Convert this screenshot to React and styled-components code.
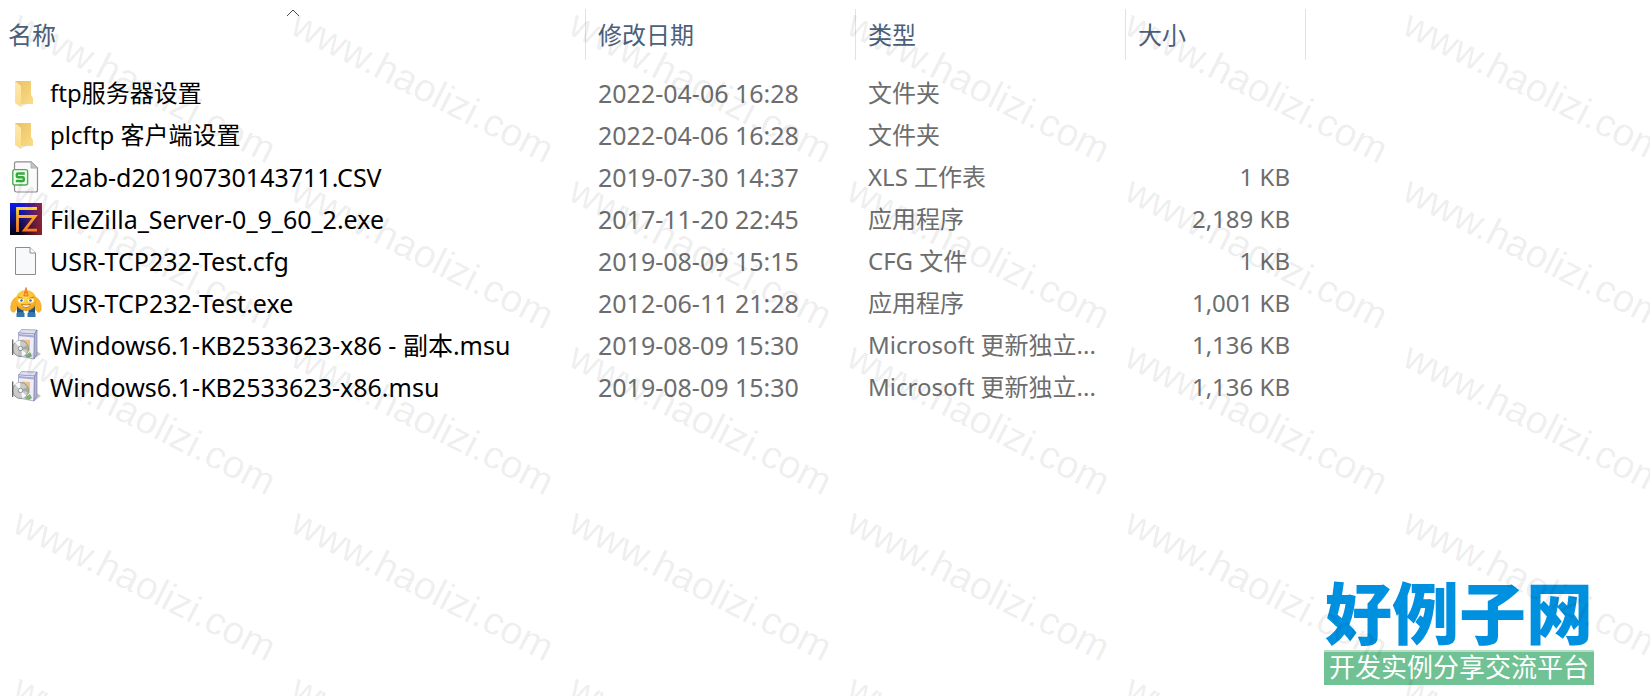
import styled, { createGlobalStyle } from "styled-components";

const files = [
  { icon: "folder", name: "ftp服务器设置", date: "2022-04-06 16:28", type: "文件夹", size: "" },
  { icon: "folder", name: "plcftp 客户端设置", date: "2022-04-06 16:28", type: "文件夹", size: "" },
  { icon: "csv", name: "22ab-d20190730143711.CSV", date: "2019-07-30 14:37", type: "XLS 工作表", size: "1 KB" },
  { icon: "filezilla", name: "FileZilla_Server-0_9_60_2.exe", date: "2017-11-20 22:45", type: "应用程序", size: "2,189 KB" },
  { icon: "file", name: "USR-TCP232-Test.cfg", date: "2019-08-09 15:15", type: "CFG 文件", size: "1 KB" },
  { icon: "usr", name: "USR-TCP232-Test.exe", date: "2012-06-11 21:28", type: "应用程序", size: "1,001 KB" },
  { icon: "msu", name: "Windows6.1-KB2533623-x86 - 副本.msu", date: "2019-08-09 15:30", type: "Microsoft 更新独立...", size: "1,136 KB" },
  { icon: "msu", name: "Windows6.1-KB2533623-x86.msu", date: "2019-08-09 15:30", type: "Microsoft 更新独立...", size: "1,136 KB" },
];

const marks = Array.from({ length: 30 }, (_, i) => i);

const FolderIcon = () => (
  <Icon viewBox="0 0 32 32">
    <defs>
      <linearGradient id="folderBack" x1="0" y1="0" x2="1" y2="1">
        <stop offset="0" stopColor="#e9c163" />
        <stop offset="1" stopColor="#fbdc86" />
      </linearGradient>
      <linearGradient id="folderFlap" x1="0" y1="0" x2="0" y2="1">
        <stop offset="0" stopColor="#ffeab0" />
        <stop offset="1" stopColor="#fbdb88" />
      </linearGradient>
    </defs>
    <path d="M10 30l7-3h-7z" fill="#e6e6e6" />
    <path d="M5 4h16v14l2 3v6H8L5 24z" fill="url(#folderBack)" />
    <path d="M5 4l6 5v21l-6-4z" fill="url(#folderFlap)" />
  </Icon>
);

const CsvIcon = () => (
  <Icon viewBox="0 0 32 32">
    <path d="M6 .8h15l6.500 6.300V29a2 2 0 0 1-2 2H6.500a2 2 0 0 1-2-2V2.300A1.500 1.500 0 0 1 6 .8z" fill="#fafafa" stroke="#8d8d8d" strokeWidth="1.200" />
    <path d="M21 .8v6.300h6.500z" fill="#c3c7cb" stroke="#a3a7ab" strokeWidth=".8" />
    <rect x="2.800" y="8.600" width="14.800" height="15.400" rx="2" fill="#f5fff5" stroke="#4caf50" strokeWidth="1.400" />
    <path d="M14.800 12.500H7.800a1 1 0 0 0-1 1v1.700a1 1 0 0 0 1 1h5a1 1 0 0 1 1 1V19a1 1 0 0 1-1 1H5.800" fill="none" stroke="#35ab3c" strokeWidth="2.400" />
  </Icon>
);

const FileZillaIcon = () => (
  <Icon viewBox="0 0 32 32">
    <defs>
      <linearGradient id="fzBlue" x1="0" y1="0" x2="0" y2="1">
        <stop offset="0" stopColor="#0a1cf0" />
        <stop offset="1" stopColor="#06020e" />
      </linearGradient>
      <linearGradient id="fzRed" x1="0" y1="0" x2="1" y2="0">
        <stop offset=".3" stopColor="#a0252c" stopOpacity="0" />
        <stop offset="1" stopColor="#a0252c" stopOpacity=".9" />
      </linearGradient>
      <linearGradient id="fzMark" x1="0" y1="0" x2="0" y2="32" gradientUnits="userSpaceOnUse">
        <stop offset=".1" stopColor="#ffe42c" />
        <stop offset=".5" stopColor="#fb9e26" />
        <stop offset="1" stopColor="#f86b20" />
      </linearGradient>
    </defs>
    <rect width="32" height="32" fill="url(#fzBlue)" />
    <rect width="32" height="32" fill="url(#fzRed)" />
    <path d="M27 5.500H7.500V29M7.500 13.500H25L14.500 27.200H27" fill="none" stroke="url(#fzMark)" strokeWidth="2.800" />
  </Icon>
);

const FileIcon = () => (
  <Icon viewBox="0 0 32 32">
    <path d="M5.500 2.500h14.500l5.500 5.500v21.500h-20z" fill="#f7f9fa" stroke="#8c8c8c" />
    <path d="M20 2.500v5.500h5.500" fill="#fff" stroke="#8c8c8c" />
  </Icon>
);

const UsrIcon = () => (
  <Icon viewBox="0 0 32 32">
    <defs>
      <radialGradient id="usrBody" cx=".45" cy=".35" r=".65">
        <stop offset="0" stopColor="#ffe14a" />
        <stop offset=".7" stopColor="#fdb92a" />
        <stop offset="1" stopColor="#eb9310" />
      </radialGradient>
    </defs>
    <path d="M7 19h18v8h-6.500v-4h-5v4H7z" fill="#1f527f" />
    <path d="M6.500 26q4-2 8 0v4h-8zM17.500 26q4-2 8 0v4h-8z" fill="#3478ab" />
    <path d="M7 10C2.500 11 0 18 1 23c1 3 4 3 5.500-1zM25 10c4.500 1 7 8 6 13-1 3-4 3-5.500-1z" fill="#fbb52c" stroke="#e99a1e" strokeWidth=".6" />
    <ellipse cx="16" cy="13.500" rx="10.500" ry="10.500" fill="url(#usrBody)" />
    <path d="M16 .5l-2.200 8.500h4.400z" fill="#ffa64a" stroke="#e4601d" strokeWidth=".7" />
    <path d="M14.800 5.500h2.400" stroke="#e4601d" strokeWidth=".8" />
    <path d="M8 10l5 1.500M24 10l-5 1.500" stroke="#b06a10" strokeWidth=".8" />
    <ellipse cx="11" cy="13.500" rx="2.800" ry="2" fill="#fff" />
    <ellipse cx="21" cy="13.500" rx="2.800" ry="2" fill="#fff" />
    <circle cx="11.500" cy="13.500" r="1.300" fill="#4a62b0" />
    <circle cx="20.500" cy="13.500" r="1.300" fill="#4a62b0" />
    <path d="M11.500 17.500q4.500 1 9 0-1 3-4.500 3t-4.500-3z" fill="#fff" stroke="#a65b0c" strokeWidth=".7" />
  </Icon>
);

const MsuIcon = () => (
  <Icon viewBox="0 0 32 32">
    <path d="M25 21l6 4-7 5z" fill="#c4c4c4" />
    <path d="M8.500 4l3-3.500 15.500 .5-2.500 4z" fill="#dfe0f3" stroke="#7b7da8" strokeWidth=".6" />
    <path d="M8.500 4l16 1-.5 25-15.500-3z" fill="#eceef8" stroke="#8183ad" strokeWidth=".6" />
    <path d="M24.500 5L27 1v24l-3 5z" fill="#b2b4d3" stroke="#7073a2" strokeWidth=".6" />
    <path d="M8.500 6l16 1.500" stroke="#a5a8d3" strokeWidth="2" />
    <path d="M12 10.500l8 .5v11l-5 2z" fill="#edc187" />
    <circle cx="10.500" cy="19.500" r="8" fill="#c8cbcb" stroke="#777" strokeWidth=".7" />
    <path d="M10.500 19.500L5 13.500a8 8 0 0 1 5-2zM10.500 19.500l6 5a8 8 0 0 1-4 3z" fill="#f7f8f5" />
    <path d="M10.500 19.500l7-3.500a8 8 0 0 1 .5 5z" fill="#9fae9c" />
    <path d="M14 27l6-4 2 4-3 2z" fill="#86ad7c" />
    <circle cx="10.500" cy="19.500" r="2.200" fill="#fff" stroke="#777" strokeWidth=".8" />
    <path d="M2.700 10.500v15.500" stroke="#555" strokeWidth="1.200" />
  </Icon>
);

const icons = {
  folder: FolderIcon,
  csv: CsvIcon,
  filezilla: FileZillaIcon,
  file: FileIcon,
  usr: UsrIcon,
  msu: MsuIcon,
};

const FileRow = ({ file }) => {
  const TypeIcon = icons[file.icon];
  return (
    <tr>
      <Cell>
        <NameBox>
          <TypeIcon />
          <FileName $folder={file.icon === "folder"}>{file.name}</FileName>
        </NameBox>
      </Cell>
      <DateCell>{file.date}</DateCell>
      <MutedCell>{file.type}</MutedCell>
      <SizeCell>{file.size}</SizeCell>
    </tr>
  );
};

const App = () => {
  return (
    <>
      <GlobalStyle />
      <Page>
        <FileTable>
          <colgroup>
            <col />
            <Col $width={270} />
            <Col $width={270} />
            <Col $width={180} />
          </colgroup>
          <thead>
            <tr>
              <HeadCell $first aria-sort="ascending">
                <SortArrow viewBox="0 0 14 8">
                  <path d="M1 7l6-6 6 6" fill="none" stroke="#4a4a4a" />
                </SortArrow>
                <SortButton>名称</SortButton>
              </HeadCell>
              <HeadCell>
                <SortButton>修改日期</SortButton>
              </HeadCell>
              <HeadCell>
                <SortButton>类型</SortButton>
              </HeadCell>
              <HeadCell>
                <SortButton>大小</SortButton>
              </HeadCell>
            </tr>
          </thead>
          <TableBody>
            {files.map((file) => (
              <FileRow key={file.name} file={file} />
            ))}
          </TableBody>
        </FileTable>
        <Logo>
          <LogoName>好例子网</LogoName>
          <LogoSlogan>开发实例分享交流平台</LogoSlogan>
        </Logo>
        <Watermark aria-hidden="true">
          {marks.map((i) => (
            <MarkTile key={i}>
              <MarkText>www.haolizi.com</MarkText>
            </MarkTile>
          ))}
        </Watermark>
      </Page>
    </>
  );
};

const GlobalStyle = createGlobalStyle`
  * {
    box-sizing: border-box;
  }
  body {
    margin: 0;
    background-color: #fff;
    font-family: "Noto Sans", "Noto Sans CJK SC", sans-serif;
    font-size: 24px;
  }
`;

const Page = styled.main`
  position: relative;
  display: flex;
  flex-direction: column;
  min-height: 100vh;
  padding: 9px 0 11px;
  overflow: hidden;
`;

const FileTable = styled.table`
  width: calc(100% - 344px);
  min-width: 1200px;
  table-layout: fixed;
  border-collapse: separate;
  border-spacing: 0;
`;

const Col = styled.col`
  width: ${(props) => props.$width}px;
`;

const HeadCell = styled.th`
  position: relative;
  height: 51px;
  padding: 0 0 0 ${(props) => (props.$first ? 8 : 12)}px;
  border-right: 1px solid #e2e2e2;
  text-align: left;
`;

const SortArrow = styled.svg`
  position: absolute;
  top: 0;
  left: 50%;
  width: 14px;
  height: 8px;
  transform: translateX(-50%);
`;

const SortButton = styled.button`
  padding: 0;
  border: none;
  background: none;
  color: #4c607a;
  font-family: inherit;
  font-size: 24px;
  line-height: 32px;
`;

/* gap between the header and the first file */
const TableBody = styled.tbody`
  &::before {
    content: "";
    display: block;
    height: 12px;
  }
`;

const Cell = styled.td`
  height: 42px;
  padding: 0 0 0 10px;
  color: #000;
  line-height: 32px;
  white-space: nowrap;
`;

const MutedCell = styled(Cell)`
  padding-left: 12px;
  color: #6d6d6d;
`;

const DateCell = styled(MutedCell)`
  font-size: 25px;
`;

const SizeCell = styled(MutedCell)`
  padding-right: 16px;
  text-align: right;
`;

const NameBox = styled.div`
  display: flex;
  align-items: center;
  gap: 8px;
`;

const FileName = styled.span`
  overflow: hidden;
  font-size: ${(props) => (props.$folder ? 24 : 25)}px;
  text-overflow: ellipsis;
`;

const Icon = styled.svg`
  flex: none;
  width: 32px;
  height: 32px;
`;

const Logo = styled.div`
  align-self: flex-end;
  width: 270px;
  margin-top: auto;
  margin-right: 56px;
  font-family: "Noto Sans CJK SC", sans-serif;
  text-align: center;
  white-space: nowrap;
`;

const LogoName = styled.div`
  padding-bottom: 6px;
  color: #0090e0;
  font-size: 67px;
  font-weight: 900;
  line-height: 68px;
`;

const LogoSlogan = styled.div`
  height: 35px;
  border-top: 2px solid #b5dfc5;
  background-color: #70c193;
  color: #fff;
  font-size: 26px;
  line-height: 28px;
`;

const Watermark = styled.div`
  position: absolute;
  top: 0;
  right: -278px;
  bottom: 0;
  left: 0;
  display: grid;
  grid-template-columns: repeat(auto-fill, 278px);
  grid-auto-rows: 166px;
  overflow: hidden;
  pointer-events: none;
`;

const MarkTile = styled.div`
  padding: 0 0 0 10px;
`;

const MarkText = styled.span`
  display: inline-block;
  color: rgba(0, 0, 0, 0.08);
  font-family: "Liberation Sans", sans-serif;
  font-size: 39px;
  line-height: 40px;
  transform: rotate(27deg);
  transform-origin: 0 34px;
`;

export default App;
